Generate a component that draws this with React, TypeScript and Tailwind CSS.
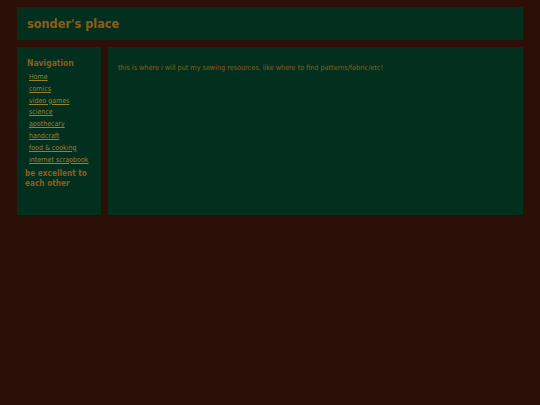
const links = ['Home', 'comics', 'video games', 'science', 'apothecary', 'handcraft', 'food & cooking', 'internet scrapbook'];

export default function App() {
  return (
    <div className="min-h-[405px] w-full bg-[#2c0f07] pt-[7px] px-[17px] font-['DejaVu_Sans_Condensed','DejaVu_Sans',sans-serif] font-stretch-condensed text-[#8d5c1c]">
      <header className="h-[33px] bg-[#03301e] flex items-center px-[10px] pt-[2px]">
        <h1 className="text-[12.6px] font-bold leading-none">sonder's place</h1>
      </header>
      <div className="flex gap-[7px] mt-[7px] h-[168px]">
        <aside className="w-[84px] bg-[#03301e] pt-[10px] px-[8px]">
          <h2 className="text-[8.5px] font-bold px-[2px] leading-[12px]">Navigation</h2>
          <ul className="mt-[-1px] pl-[4px]">
            {links.map((l) => (
              <li key={l} className="h-[11.8px] leading-[11.8px]">
                <a href="#" className="text-[7px] text-[#97802e] underline">{l}</a>
              </li>
            ))}
          </ul>
          <p className="mt-[6px] text-[8.2px] font-bold leading-[10px]">be excellent to each other</p>
        </aside>
        <main className="flex-1 bg-[#03301e] pt-[16px] px-[10px]">
          <p className="text-[7.2px] leading-[10px]">this is where i will put my sewing resources, like where to find patterns/fabric/etc!</p>
        </main>
      </div>
    </div>
  );
}
